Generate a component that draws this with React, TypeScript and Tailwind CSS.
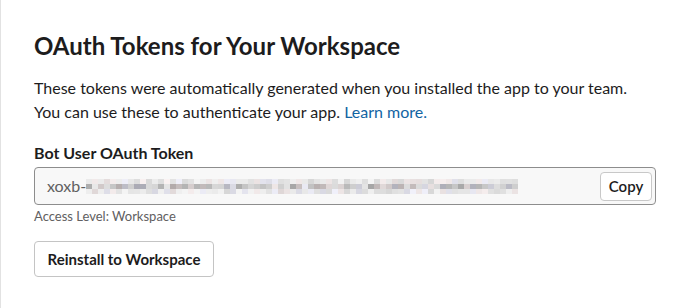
import React from "react";

function Mosaic() {
  const cols = 72;
  const rows = 3;
  const size = 6;
  let seed = 12345;
  const rnd = () => {
    seed = (seed * 1103515245 + 12345) & 0x7fffffff;
    return seed / 0x7fffffff;
  };
  const rects: React.ReactElement[] = [];
  for (let r = 0; r < rows; r++) {
    for (let c = 0; c < cols; c++) {
      const v = rnd();
      let g: number;
      if (r === 1) g = 165 + Math.floor(v * 70);
      else g = 215 + Math.floor(v * 30);
      const tint = rnd();
      const rr = g + (tint > 0.8 ? 8 : 0);
      const bb = g + (tint < 0.2 ? 10 : 0);
      rects.push(
        <rect
          key={`${r}-${c}`}
          x={c * size}
          y={r * 5}
          width={size}
          height={5}
          fill={`rgb(${Math.min(rr, 250)},${g},${Math.min(bb, 250)})`}
        />
      );
    }
  }
  return (
    <svg width={cols * size} height={15} className="block">
      {rects}
    </svg>
  );
}

export default function App() {
  return (
    <div
      className="w-[688px] h-[308px] bg-white overflow-hidden"
      style={{ fontFamily: "Lato, 'Noto Sans', sans-serif" }}
    >
      <div className="h-[320px] border-l border-[#e2e2e2] pl-[33px] pr-[32px] pt-[30px] text-[#1d1c1d]">
        <h1 className="text-[24px] leading-[32px] font-bold">OAuth Tokens for Your Workspace</h1>
        <p className="mt-[14px] text-[16px] leading-[24px]">
          These tokens were automatically generated when you installed the app to your team.
          <br />
          You can use these to authenticate your app.{" "}
          <span className="text-[#1264a3]">Learn more.</span>
        </p>
        <div className="mt-[18px] text-[16px] leading-[22px] font-bold">Bot User OAuth Token</div>
        <div className="mt-[3px] w-[622px] h-[38px] border border-[#8d8d8d] rounded-[4px] bg-[#f8f8f8] flex items-center pl-[12px] pr-[3px]">
          <span className="text-[16px] text-[#616061]">xoxb-</span>
          <div>
            <Mosaic />
          </div>
          <div className="flex-1" />
          <button className="h-[29px] w-[52px] bg-white border border-[#c8c8c8] rounded-[4px] text-[15px] font-semibold text-[#1d1c1d]">
            Copy
          </button>
        </div>
        <div className="mt-[2px] text-[13px] leading-[18px] text-[#616061]">Access Level: Workspace</div>
        <button className="mt-[16px] h-[36px] w-[180px] bg-white border border-[#c4c4c4] rounded-[4px] text-[15px] font-bold text-[#1d1c1d]">
          Reinstall to Workspace
        </button>
      </div>
    </div>
  );
}
